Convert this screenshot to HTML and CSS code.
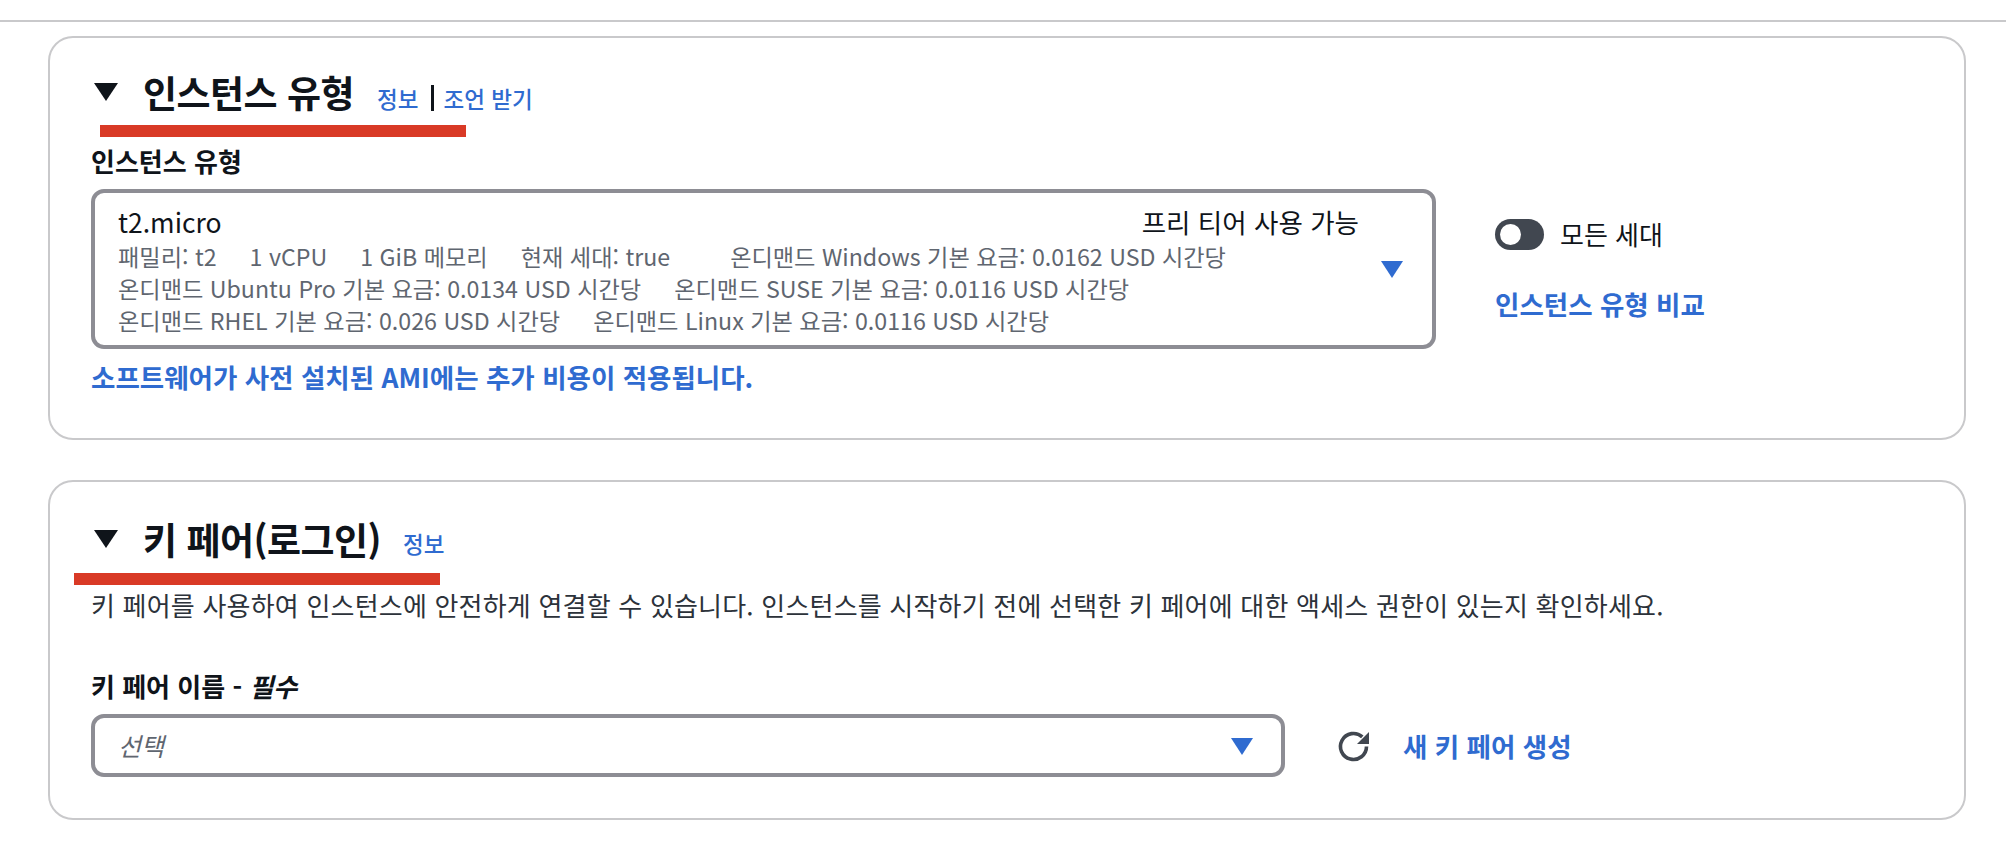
FILE: index.html

```html
<!DOCTYPE html>
<html lang="ko">
<head>
  <meta charset="UTF-8" />
  <title>인스턴스 유형</title>
  <link rel="stylesheet" href="styles.css">
</head>
<body>
  <hr class="top-rule" />

  <section class="card card-instance">
    <div class="card-head">
      <span class="caret"></span>
      <h2>인스턴스 유형</h2>
      <a class="info" href="#">정보</a>
      <span class="sep"></span>
      <a class="info" href="#">조언 받기</a>
    </div>
    <span class="mark mark-instance"></span>

    <div class="field-label">인스턴스 유형</div>
    <div class="instance-row">
      <div class="select select-big">
        <div class="select-title">
          <span>t2.micro</span>
          <span>프리 티어 사용 가능</span>
        </div>
        <div class="meta">
          <span>패밀리: t2</span>
          <span>1 vCPU</span>
          <span>1 GiB 메모리</span>
          <span>현재 세대: true</span>
          <span class="meta-last">온디맨드 Windows 기본 요금: 0.0162 USD 시간당</span>
        </div>
        <div class="meta">
          <span>온디맨드 Ubuntu Pro 기본 요금: 0.0134 USD 시간당</span>
          <span>온디맨드 SUSE 기본 요금: 0.0116 USD 시간당</span>
        </div>
        <div class="meta">
          <span>온디맨드 RHEL 기본 요금: 0.026 USD 시간당</span>
          <span>온디맨드 Linux 기본 요금: 0.0116 USD 시간당</span>
        </div>
        <span class="arrow arrow-big"></span>
      </div>
      <div class="side">
        <div class="toggle-row">
          <span class="toggle"></span>
          <span>모든 세대</span>
        </div>
        <a class="link" href="#">인스턴스 유형 비교</a>
      </div>
    </div>
    <a class="link notice" href="#">소프트웨어가 사전 설치된 AMI에는 추가 비용이 적용됩니다.</a>
  </section>

  <section class="card card-key">
    <div class="card-head">
      <span class="caret"></span>
      <h2>키 페어(로그인)</h2>
      <a class="info" href="#">정보</a>
    </div>
    <span class="mark mark-key"></span>

    <p class="desc">키 페어를 사용하여 인스턴스에 안전하게 연결할 수 있습니다. 인스턴스를 시작하기 전에 선택한 키 페어에 대한 액세스 권한이 있는지 확인하세요.</p>

    <div class="field-label field-key">키 페어 이름 - <i>필수</i></div>
    <div class="key-row">
      <div class="select select-small">
        <span class="placeholder">선택</span>
        <span class="arrow"></span>
      </div>
      <svg class="refresh" viewBox="0 0 34 34" width="34" height="34" aria-hidden="true">
        <path d="M29.5 17.5a13 13 0 1 1-4.2-9.6" fill="none" stroke="#414750" stroke-width="3.6" />
        <path d="M32 3v12H20z" fill="#414750" />
      </svg>
      <a class="link" href="#">새 키 페어 생성</a>
    </div>
  </section>
</body>
</html>
```

FILE: styles.css

```css
:root {
  --blue: #2f6bd0;
  --ink: #0f141a;
  --gray: #5f6670;
  --rule: #c9c9cb;
  --box: #8d8d94;
  --mark: #d93a26;
}

* {
  box-sizing: border-box;
}

body {
  margin: 0;
  height: 844px;
  overflow: hidden;
  background: #fff;
  font-family: "Noto Sans CJK KR", "Noto Sans", sans-serif;
  color: var(--ink);
}

a {
  text-decoration: none;
}

.top-rule {
  margin: 20px 0 14px;
  border: 0;
  border-top: 2px solid var(--rule);
}

.card {
  position: relative;
  margin: 0 40px 40px 48px;
  padding: 0 41px;
  border: 2px solid var(--rule);
  border-radius: 25px;
}

.card-instance {
  height: 404px;
}

.card-key {
  height: 340px;
}

.card-head {
  display: flex;
  align-items: center;
  height: 50px;
  margin-top: 29px;
}

.card-key .card-head {
  margin-top: 32px;
}

.caret {
  width: 0;
  height: 0;
  margin: 0 25px 0 3px;
  border-left: 12px solid transparent;
  border-right: 12px solid transparent;
  border-top: 18px solid var(--ink);
}

h2 {
  margin: 0 23px 0 0;
  font-size: 37px;
  font-weight: 700;
  letter-spacing: -0.5px;
  line-height: 50px;
}

.card-key h2 {
  margin-right: 22px;
}

.info {
  margin-top: 11px;
  color: var(--blue);
  font-size: 22.5px;
  font-weight: 500;
  line-height: 30px;
}

.card-key .info {
  margin-top: 7px;
}

.sep {
  width: 3px;
  height: 26px;
  margin: 11px 10px 0 12px;
  background: var(--ink);
}

.mark {
  position: absolute;
  height: 12px;
  background: var(--mark);
}

.mark-instance {
  left: 50px;
  top: 87px;
  width: 366px;
}

.mark-key {
  left: 24px;
  top: 91px;
  width: 366px;
}

.field-label {
  margin-top: 27px;
  font-size: 26px;
  font-weight: 700;
  line-height: 34px;
}

.card-key .field-label {
  margin-top: 46px;
}

.instance-row {
  display: flex;
  margin-top: 11px;
}

.select {
  position: relative;
  border: 4px solid var(--box);
  border-radius: 13px;
}

.select-big {
  width: 1345px;
  height: 160px;
  padding: 10px 23px;
}

.select-title {
  display: flex;
  justify-content: space-between;
  width: 1241px;
  font-size: 26.5px;
  line-height: 37px;
}

.meta {
  display: flex;
  gap: 33px;
  color: var(--gray);
  font-size: 23.2px;
  line-height: 32px;
}

.meta-last {
  margin-left: 27px;
}

.arrow {
  position: absolute;
  right: 28px;
  top: 20px;
  width: 0;
  height: 0;
  border-left: 11px solid transparent;
  border-right: 11px solid transparent;
  border-top: 17px solid var(--blue);
}

.arrow-big {
  top: 68px;
  right: 29px;
}

.side {
  margin-left: 59px;
  padding-top: 26px;
}

.toggle-row {
  display: flex;
  align-items: center;
  gap: 16px;
  font-size: 26px;
  line-height: 38px;
}

.toggle {
  position: relative;
  width: 49px;
  height: 31px;
  border-radius: 16px;
  background: #414750;
}

.toggle::before {
  content: "";
  position: absolute;
  left: 5px;
  top: 5px;
  width: 21px;
  height: 21px;
  border-radius: 50%;
  background: #fff;
}

.link {
  color: var(--blue);
  font-size: 26.5px;
  font-weight: 700;
}

.side .link {
  display: block;
  margin-top: 33px;
  line-height: 36px;
}

.notice {
  display: block;
  margin-top: 10px;
  line-height: 36px;
}

.desc {
  margin: 23px 0 0;
  color: #2c323a;
  font-size: 26px;
  letter-spacing: 0.2px;
  line-height: 36px;
}

.key-row {
  display: flex;
  align-items: center;
  margin-top: 11px;
}

.select-small {
  width: 1194px;
  height: 63px;
  padding: 0 23px;
  line-height: 55px;
}

.placeholder {
  color: var(--gray);
  font-size: 25px;
  font-style: italic;
}

.refresh {
  margin-left: 52px;
}

.key-row .link {
  margin-left: 32px;
}
```
